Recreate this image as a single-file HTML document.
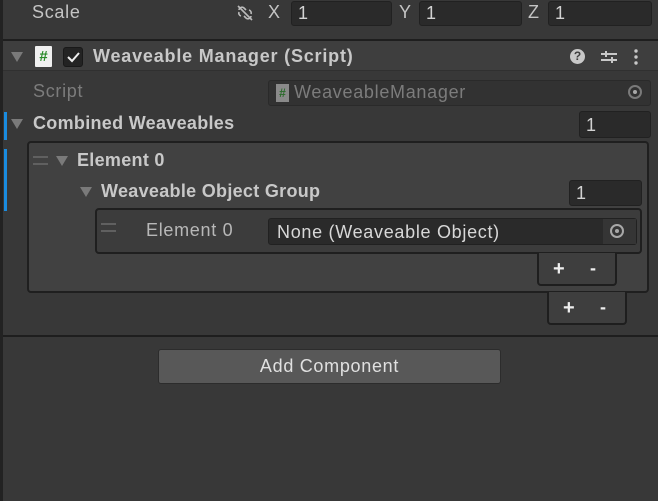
<!DOCTYPE html>
<html><head><style>
*{box-sizing:border-box;margin:0;padding:0}
body{width:658px;height:501px;background:#383838;font-family:"Liberation Sans",sans-serif;color:#c4c4c4;position:relative;overflow:hidden;font-size:18px;letter-spacing:0.7px}
.a{position:absolute}
.fld{position:absolute;background:#2a2a2a;border:1px solid #212121;border-radius:3px;color:#d2d2d2;padding-left:6px;line-height:22px}
.t{position:absolute;white-space:nowrap}
.b{font-weight:bold;color:#c8c8c8;letter-spacing:0.3px}
.tri{position:absolute;width:0;height:0;border-left:6px solid transparent;border-right:6px solid transparent;border-top:10px solid #7a7a7a}
.tgt{position:absolute;width:14px;height:14px;border:2px solid #a8a8a8;border-radius:50%}
.tgt:after{content:"";position:absolute;left:3px;top:3px;width:4px;height:4px;background:#a8a8a8;border-radius:50%}
.pm{position:absolute;background:#3e3e3e;border:2px solid #1e1e1e;border-top:none;border-radius:0 0 4px 4px;color:#eee;font-weight:bold}
.hd{position:absolute;height:2px;background:#606060}
</style></head><body>
<div class="a" style="left:0;top:0;width:3px;height:501px;background:#222"></div>
<div class="t" style="left:32px;top:2px">Scale</div>
<svg class="a" style="left:235px;top:4px" width="20" height="18" viewBox="0 0 20 18"><path d="M4 6a3 3 0 0 1 5-2l2 2M16 12a3 3 0 0 1-5 2l-2-2M6 12a3 3 0 0 1-2-4M14 6a3 3 0 0 1 2 4M3 2l14 14" stroke="#bbb" stroke-width="1.6" fill="none"/></svg>
<div class="t" style="left:268px;top:2px">X</div>
<div class="fld" style="left:291px;top:1px;width:101px;height:25px">1</div>
<div class="t" style="left:399px;top:2px">Y</div>
<div class="fld" style="left:419px;top:1px;width:103px;height:25px">1</div>
<div class="t" style="left:528px;top:2px">Z</div>
<div class="fld" style="left:548px;top:1px;width:104px;height:25px">1</div>
<div class="a" style="left:3px;top:39px;width:655px;height:2px;background:#1e1e1e"></div>
<div class="a" style="left:3px;top:41px;width:655px;height:30px;background:#3e3e3e;border-bottom:1px solid #303030"></div>
<div class="tri" style="left:11px;top:52px"></div>
<div class="a" style="left:35px;top:46px;width:17px;height:21px;background:#f0f0f0;border-radius:1px;color:#2a8a2a;font-weight:bold;font-size:15px;letter-spacing:0;text-align:center;line-height:21px">#</div>
<div class="a" style="left:63px;top:47px;width:20px;height:20px;background:#232323;border:1px solid #191919;border-radius:3px"></div>
<svg class="a" style="left:63px;top:47px" width="20" height="20"><path d="M5 10l4 4 7-8" stroke="#eee" stroke-width="2" fill="none"/></svg>
<div class="t b" style="left:93px;top:46px;letter-spacing:0.8px">Weaveable Manager (Script)</div>
<div class="a" style="left:570px;top:49px;width:15px;height:15px;background:#c8c8c8;border-radius:50%;color:#3e3e3e;font-size:12px;letter-spacing:0;font-weight:bold;text-align:center;line-height:15px">?</div>
<svg class="a" style="left:600px;top:48px" width="18" height="18"><path d="M1 6h16M1 12h16M6 3v6M12 9v6" stroke="#c8c8c8" stroke-width="2"/></svg>
<svg class="a" style="left:632px;top:48px" width="8" height="18"><circle cx="4" cy="3" r="1.7" fill="#c8c8c8"/><circle cx="4" cy="9" r="1.7" fill="#c8c8c8"/><circle cx="4" cy="15" r="1.7" fill="#c8c8c8"/></svg>
<div class="t" style="left:33px;top:81px;color:#7c7c7c">Script</div>
<div class="a" style="left:268px;top:80px;width:383px;height:26px;background:#323232;border:1px solid #2a2a2a;border-radius:3px"></div>
<div class="a" style="left:276px;top:84px;width:13px;height:18px;background:#8a8a8a;color:#2a6a2a;font-size:12px;letter-spacing:0;font-weight:bold;text-align:center;line-height:18px">#</div>
<div class="t" style="left:294px;top:82px;color:#7c7c7c">WeaveableManager</div>
<div class="tgt" style="left:628px;top:85px;border-color:#7a7a7a"></div>
<div class="a" style="left:4px;top:112px;width:3px;height:28px;background:#1a8ce0"></div>
<div class="tri" style="left:11px;top:119px"></div>
<div class="t b" style="left:33px;top:113px">Combined Weaveables</div>
<div class="fld" style="left:579px;top:111px;width:72px;height:27px;line-height:26px">1</div>
<div class="a" style="left:4px;top:149px;width:3px;height:62px;background:#1a8ce0"></div>
<div class="a" style="left:27px;top:141px;width:622px;height:152px;background:#414141;border:2px solid #1f1f1f;border-radius:4px"></div>
<div class="hd" style="left:33px;top:156px;width:15px"></div><div class="hd" style="left:33px;top:163px;width:15px"></div>
<div class="tri" style="left:56px;top:156px"></div>
<div class="t b" style="left:77px;top:150px">Element 0</div>
<div class="tri" style="left:80px;top:187px"></div>
<div class="t b" style="left:101px;top:181px">Weaveable Object Group</div>
<div class="fld" style="left:569px;top:180px;width:73px;height:26px;line-height:25px">1</div>
<div class="a" style="left:95px;top:208px;width:547px;height:46px;background:#3c3c3c;border:2px solid #1f1f1f;border-radius:4px"></div>
<div class="hd" style="left:101px;top:223px;width:15px"></div><div class="hd" style="left:101px;top:230px;width:15px"></div>
<div class="t" style="left:146px;top:220px;color:#b8b8b8">Element 0</div>
<div class="fld" style="left:268px;top:218px;width:369px;height:27px;line-height:26px;padding-left:8px;color:#d8d8d8">None (Weaveable Object)</div>
<div class="a" style="left:603px;top:219px;width:33px;height:25px;background:#353535"></div>
<div class="tgt" style="left:610px;top:224px"></div>
<div class="pm" style="left:537px;top:253px;width:80px;height:33px"><span class="a" style="left:14px;top:5px;font-size:20px">+</span><span class="a" style="left:51px;top:5px;font-size:18px">-</span></div>
<div class="pm" style="left:547px;top:292px;width:80px;height:33px"><span class="a" style="left:14px;top:5px;font-size:20px">+</span><span class="a" style="left:51px;top:5px;font-size:18px">-</span></div>
<div class="a" style="left:3px;top:335px;width:655px;height:2px;background:#1e1e1e"></div>
<div class="a" style="left:158px;top:349px;width:343px;height:35px;background:#585858;border:1px solid #2c2c2c;border-radius:3px;text-align:center;line-height:33px;color:#e0e0e0">Add Component</div>
</body></html>
